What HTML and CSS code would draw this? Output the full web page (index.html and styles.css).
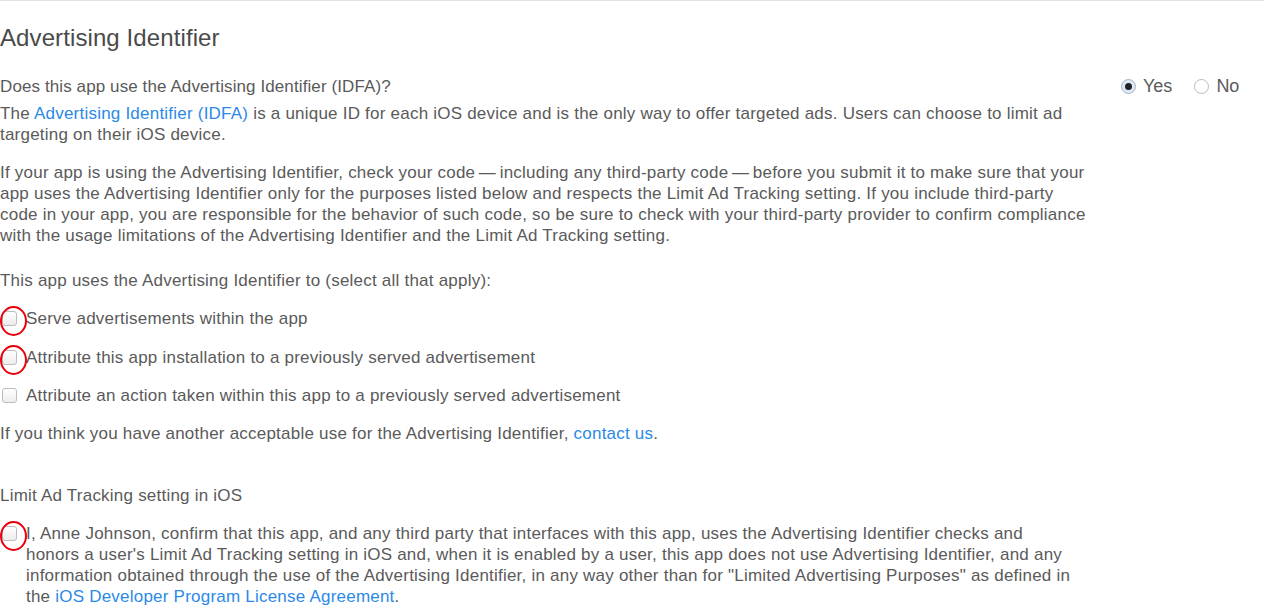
FILE: index.html
```html
<!DOCTYPE html>
<html>
<head>
<meta charset="utf-8">
<link rel="stylesheet" href="styles.css">
</head>
<body>
<div class="page">
  <h1 class="title">Advertising Identifier</h1>
  <div class="question-row">
    <div class="main">
      <p class="question">Does this app use the Advertising Identifier (IDFA)?</p>
      <p class="text">The <a href="#">Advertising Identifier (IDFA)</a> is a unique ID for each iOS device and is the only way to offer targeted ads. Users can choose to limit ad targeting on their iOS device.</p>
      <p class="text para">If your app is using the Advertising Identifier, check your code&thinsp;—&thinsp;including any third-party code&thinsp;—&thinsp;before you submit it to make sure that your app uses the Advertising Identifier only for the purposes listed below and respects the Limit Ad Tracking setting. If you include third-party code in your app, you are responsible for the behavior of such code, so be sure to check with your third-party provider to confirm compliance with the usage limitations of the Advertising Identifier and the Limit Ad Tracking setting.</p>
      <p class="text select">This app uses the Advertising Identifier to (select all that apply):</p>
      <div class="checks">
        <label class="check"><span class="box marked"></span>Serve advertisements within the app</label>
        <label class="check"><span class="box marked"></span>Attribute this app installation to a previously served advertisement</label>
        <label class="check"><span class="box"></span>Attribute an action taken within this app to a previously served advertisement</label>
      </div>
      <p class="text other">If you think you have another acceptable use for the Advertising Identifier, <a href="#">contact us</a>.</p>
      <p class="text limit">Limit Ad Tracking setting in iOS</p>
      <div class="confirm">
        <span class="box marked"></span>
        <p class="text confirm-text">I, Anne Johnson, confirm that this app, and any third party that interfaces with this app, uses the Advertising Identifier checks and honors a user's Limit Ad Tracking setting in iOS and, when it is enabled by a user, this app does not use Advertising Identifier, and any information obtained through the use of the Advertising Identifier, in any way other than for "Limited Advertising Purposes" as defined in the <a href="#">iOS Developer Program License Agreement</a>.</p>
      </div>
    </div>
    <div class="radios">
      <label class="radio"><span class="dot on"></span>Yes</label>
      <label class="radio"><span class="dot"></span>No</label>
    </div>
  </div>
</div>
</body>
</html>
```
FILE: styles.css
```css
* { box-sizing: border-box; }
html, body { margin: 0; padding: 0; background: #fff; }
body {
  font-family: "Liberation Sans", Arial, sans-serif;
  color: #5a5a5a;
  font-size: 17px;
  line-height: 21px;
  letter-spacing: 0.22px;
}
.page {
  border-top: 1px solid #e3e3e3;
  width: 1264px;
  height: 607px;
  overflow: hidden;
}
.title {
  margin: 23px 0 0 0;
  font-size: 24px;
  font-weight: normal;
  line-height: 28px;
  color: #4a4a4a;
  letter-spacing: 0.1px;
}
.question-row {
  display: flex;
  margin-top: 24px;
}
.main { width: 1090px; }
p { margin: 0; }
a { color: #2b8ae8; text-decoration: none; }
.question { margin-bottom: 6px; letter-spacing: 0.1px; }
.para { margin-top: 17px; }
.select { margin-top: 24px; }
.checks {
  margin-top: 17px;
  display: flex;
  flex-direction: column;
  gap: 17.5px;
}
.check {
  display: flex;
  align-items: center;
  height: 21px;
}
.box {
  position: relative;
  flex: none;
  width: 15px;
  height: 15px;
  border: 1px solid #bdbdbd;
  border-radius: 3px;
  margin: 0 9px 0 2px;
  background: linear-gradient(#ffffff, #ececec);
}
.box.marked::after {
  content: "";
  position: absolute;
  left: -3px;
  top: -6px;
  width: 23px;
  height: 26px;
  border: 2.5px solid #e8000b;
  border-radius: 50%;
}
.other { margin-top: 17px; }
.limit { margin-top: 41px; }
.confirm {
  display: flex;
  align-items: flex-start;
  margin-top: 17px;
}
.confirm .box { margin-top: 3px; }
.confirm-text { width: 1052px; }
.radios {
  display: flex;
  gap: 22px;
  margin-left: 31px;
}
.radio {
  display: flex;
  align-items: center;
  height: 21px;
  font-size: 18px;
  letter-spacing: 0;
}
.dot {
  position: relative;
  width: 15px;
  height: 15px;
  border-radius: 50%;
  border: 1px solid #bbb;
  margin-right: 7px;
  background: #fff;
}
.dot.on { background: #dce9f8; border-color: #a9b4c2; }
.dot.on::after {
  content: "";
  position: absolute;
  left: 3px;
  top: 3px;
  width: 7px;
  height: 7px;
  border-radius: 50%;
  background: #222;
}
```
